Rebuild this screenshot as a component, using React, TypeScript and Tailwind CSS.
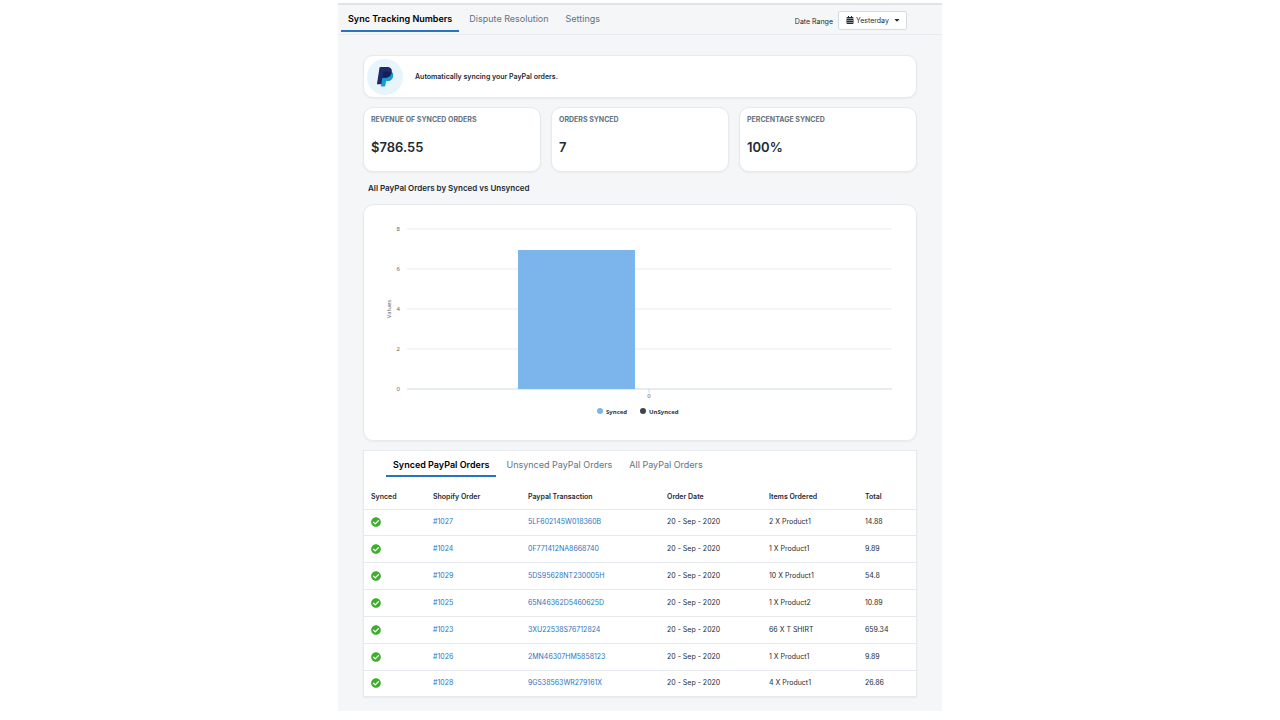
import { useState } from "react";
import { FaCalendarAlt, FaCaretDown, FaCheckCircle } from "react-icons/fa";

const mainTabs = ["Sync Tracking Numbers", "Dispute Resolution", "Settings"];
const orderTabs = ["Synced PayPal Orders", "Unsynced PayPal Orders", "All PayPal Orders"];

const stats = [
    { label: "REVENUE OF SYNCED ORDERS", value: "$786.55" },
    { label: "ORDERS SYNCED", value: "7" },
    { label: "PERCENTAGE SYNCED", value: "100%" },
];

const orders = [
    { id: "#1027", transaction: "5LF602145W018360B", items: "2 X Product1", total: "14.88" },
    { id: "#1024", transaction: "0F771412NA8668740", items: "1 X Product1", total: "9.89" },
    { id: "#1029", transaction: "5DS95628NT230005H", items: "10 X Product1", total: "54.8" },
    { id: "#1025", transaction: "65N46362D5460625D", items: "1 X Product2", total: "10.89" },
    { id: "#1023", transaction: "3XU22538S76712824", items: "66 X T SHIRT", total: "659.34" },
    { id: "#1026", transaction: "2MN46307HM5858123", items: "1 X Product1", total: "9.89" },
    { id: "#1028", transaction: "9G538563WR279161X", items: "4 X Product1", total: "26.86" },
];

const PayPalLogo = () => (
    <svg viewBox="0 0 25 31" className="h-5 w-4" aria-label="PayPal" role="img">
        <path fill="#253B80" d="M7.266 29.154l.523-3.322-1.165-.027H1.061L4.927 1.292a.316.316 0 0 1 .314-.268h9.38c3.114 0 5.263.648 6.385 1.927.526.6.861 1.227 1.023 1.917.17.724.173 1.589.007 2.644l-.012.077v.676l.526.298a3.69 3.69 0 0 1 1.065.812c.45.513.741 1.165.864 1.938.127.795.085 1.741-.123 2.812-.24 1.232-.628 2.305-1.152 3.183a6.547 6.547 0 0 1-1.825 2c-.696.494-1.523.869-2.458 1.109-.906.236-1.939.355-3.072.355h-.73c-.522 0-1.029.188-1.427.525a2.21 2.21 0 0 0-.744 1.328l-.055.299-.924 5.855-.042.215c-.011.068-.03.102-.058.125a.155.155 0 0 1-.096.035H7.266z" />
        <path fill="#179BD7" d="M23.048 7.667c-.028.179-.06.362-.096.55-1.237 6.351-5.469 8.545-10.874 8.545H9.326c-.661 0-1.218.48-1.321 1.132L6.596 26.83l-.399 2.533a.704.704 0 0 0 .695.814h4.881c.578 0 1.069-.42 1.16-.99l.048-.248.919-5.832.059-.32c.09-.572.582-.992 1.16-.992h.73c4.729 0 8.431-1.92 9.513-7.476.452-2.321.218-4.259-.978-5.622a4.667 4.667 0 0 0-1.336-1.03z" />
        <path fill="#161F55" d="M21.754 7.151a9.757 9.757 0 0 0-1.203-.267 15.284 15.284 0 0 0-2.426-.177h-7.352a1.172 1.172 0 0 0-1.159.992L8.05 17.605l-.045.289a1.336 1.336 0 0 1 1.321-1.132h2.752c5.405 0 9.637-2.195 10.874-8.545.037-.188.068-.371.096-.55a6.594 6.594 0 0 0-1.017-.429 9.045 9.045 0 0 0-.277-.087z" />
        <path fill="#1F2A6B" d="M9.614 7.699a1.169 1.169 0 0 1 1.159-.991h7.352c.871 0 1.684.057 2.426.177a9.757 9.757 0 0 1 1.481.353c.365.121.704.264 1.017.429.368-2.347-.003-3.945-1.272-5.392C20.378.682 17.853 0 14.622 0h-9.38c-.66 0-1.223.48-1.325 1.133L.01 25.898a.806.806 0 0 0 .795.932h5.791l1.454-9.225 1.564-9.906z" />
    </svg>
);

// 20px per unit on the y axis
const OrdersChart = () => (
    <svg viewBox="0 0 554 237" className="block w-full font-['Noto_Sans',sans-serif] text-[6px]">
        {[8, 6, 4, 2, 0].map((tick) => {
            const y = 185 - tick * 20;
            return (
                <g key={tick}>
                    <line x1="44" x2="529" y1={y} y2={y} stroke={tick === 0 ? "#ccd6eb" : "#ebebeb"} />
                    <text x="37" y={y + 2} textAnchor="end" fill="#666666">{tick}</text>
                </g>
            );
        })}
        <rect x="155" y="46" width="117" height="139" fill="#7cb5ec" />
        <line x1="286" x2="286" y1="185" y2="189" stroke="#ccd6eb" />
        <text x="286" y="194" textAnchor="middle" fill="#666666">0</text>
        <text x="28" y="105" textAnchor="middle" fill="#666666" transform="rotate(-90 28 105)">Values</text>
        <circle cx="237" cy="207" r="3" fill="#7cb5ec" />
        <text x="243" y="210" fill="#333333" fontWeight="700">Synced</text>
        <circle cx="280" cy="207" r="3" fill="#434348" />
        <text x="286" y="210" fill="#333333" fontWeight="700">UnSynced</text>
    </svg>
);

interface TabsProps {
    items: string[];
    size: string;
}

const Tabs = ({ items, size }: TabsProps) => {

    const [active, setActive] = useState(items[0]);

    return (
        <div role="tablist" className="flex gap-[3px]">
            {items.map((item) => (
                <button
                    key={item}
                    role="tab"
                    aria-selected={item === active}
                    onClick={() => setActive(item)}
                    className={`${size} border-b-2 px-[7px] text-[9px] whitespace-nowrap ${item === active ? "border-[#2a74bf] font-semibold text-black" : "border-transparent text-[#637381]"}`}>
                    {item}
                </button>
            ))}
        </div>
    );
}

export default function App() {
    return (
        <div className="min-h-screen bg-white pt-[3px] font-[Inter,sans-serif] text-[7px] text-[#212b36]">
            <div className="mx-auto max-w-[604px] bg-[#f4f6f8] pb-[14px]">

                {/* Header */}
                <header className="flex items-start justify-between border-t-2 border-b border-t-[#dfe3e8] border-b-[#e8ebee] pl-[3px]">
                    <Tabs items={mainTabs} size="h-[27px] pt-[3px]" />
                    <div className="mt-[6px] mr-[35px] mb-1 flex items-center gap-[5px]">
                        <label htmlFor="range" className="pt-[3px]">Date Range</label>
                        <div className="relative">
                            <select id="range" className="block h-[19px] w-[69px] appearance-none rounded-xs border border-[#d5dbe1] bg-white pt-[2px] pl-[17px] text-[7px]">
                                <option>Yesterday</option>
                                <option>Today</option>
                                <option>Last 7 days</option>
                            </select>
                            <FaCalendarAlt className="pointer-events-none absolute top-[5px] left-2 h-2 w-2" />
                            <FaCaretDown className="pointer-events-none absolute top-[5px] right-[6px] h-2 w-2" />
                        </div>
                    </div>
                </header>

                <main className="px-[25px] pt-5">

                    {/* Sync status */}
                    <section className="flex h-[43px] items-center gap-3 rounded-[10px] border border-[#e6e9ed] bg-white px-[3px] shadow-xs">
                        <div className="flex h-9 w-9 items-center justify-center rounded-full bg-[#e8f4fb]">
                            <PayPalLogo />
                        </div>
                        <p className="pt-[2px] font-semibold">Automatically syncing your PayPal orders.</p>
                    </section>

                    {/* Stats */}
                    <section className="mt-[9px] grid grid-cols-3 gap-[10px]">
                        {stats.map((stat) => (
                            <div key={stat.label} className="h-[65px] rounded-[10px] border border-[#e6e9ed] bg-white px-[7px] pt-[7px] shadow-xs">
                                <h3 className="leading-[10px] font-bold text-[#637381]">{stat.label}</h3>
                                <p className="mt-[12px] text-[13px] leading-5 font-semibold">{stat.value}</p>
                            </div>
                        ))}
                    </section>

                    {/* Chart */}
                    <h2 className="mt-[10px] pl-[5px] text-[8px] leading-3 font-semibold">All PayPal Orders by Synced vs Unsynced</h2>
                    <section className="mt-[10px] overflow-hidden rounded-[10px] bg-white shadow-xs ring-1 ring-[#e6e9ed] ring-inset">
                        <OrdersChart />
                    </section>

                    {/* Orders */}
                    <section className="mt-[9px] border border-[#e6e9ed] bg-white shadow-xs">
                        <div className="pl-[22px]">
                            <Tabs items={orderTabs} size="h-[26px] pt-[3px]" />
                        </div>
                        <table className="mt-[6px] h-[213px] w-full table-fixed text-left">
                            <thead>
                                <tr className="h-[26px] [&>th]:px-[7px] [&>th]:pt-[2px] [&>th]:font-semibold">
                                    <th className="w-[62px]">Synced</th>
                                    <th className="w-[95px]">Shopify Order</th>
                                    <th className="w-[139px]">Paypal Transaction</th>
                                    <th className="w-[102px]">Order Date</th>
                                    <th className="w-[96px]">Items Ordered</th>
                                    <th>Total</th>
                                </tr>
                            </thead>
                            <tbody>
                                {orders.map((order) => (
                                    <tr key={order.id} className="border-t border-[#e6e9ed] [&>td]:px-[7px]">
                                        <td><FaCheckCircle className="h-[10px] w-[10px] text-[#3dae2b]" aria-label="Synced" /></td>
                                        <td><a href="#" className="text-[#2a74bf]">{order.id}</a></td>
                                        <td><a href="#" className="text-[#2a74bf]">{order.transaction}</a></td>
                                        <td>20 - Sep - 2020</td>
                                        <td>{order.items}</td>
                                        <td>{order.total}</td>
                                    </tr>
                                ))}
                            </tbody>
                        </table>
                    </section>
                </main>
            </div>
        </div>
    );
}
